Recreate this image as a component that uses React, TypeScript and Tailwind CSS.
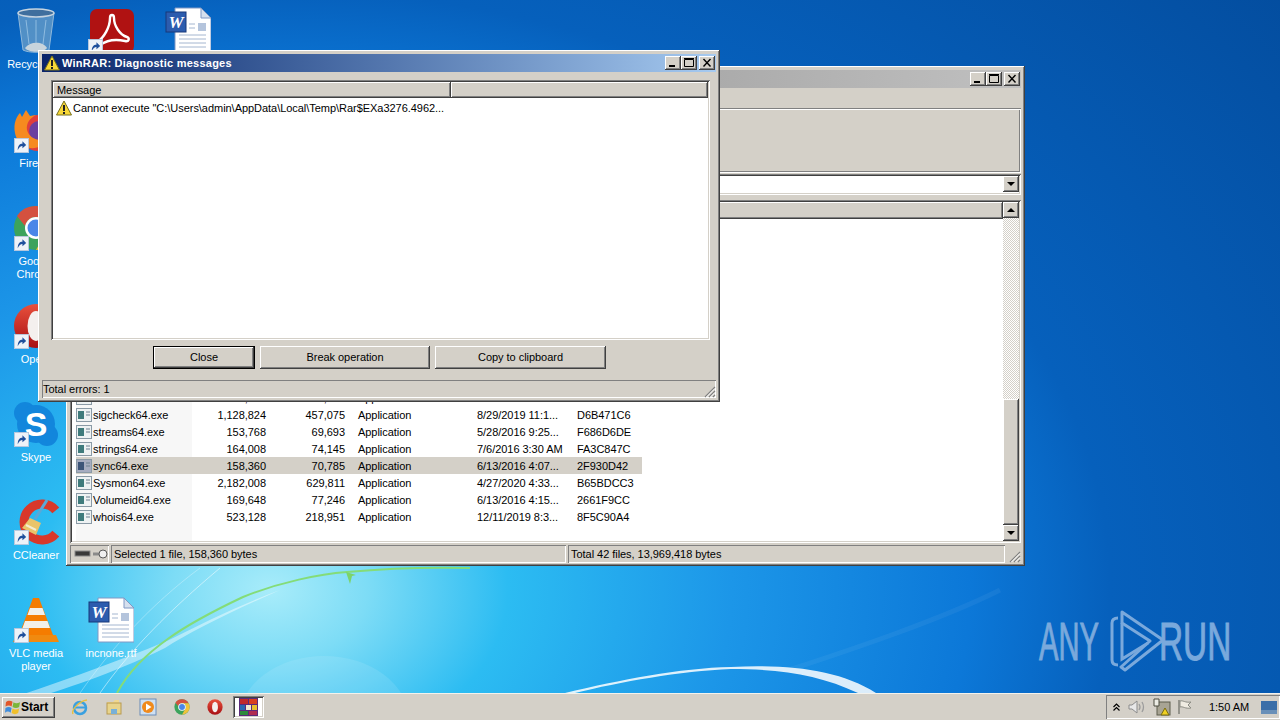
import type { ReactNode } from "react";

const raised = "shadow-[inset_-1px_-1px_0_#404040,inset_1px_1px_0_#ffffff,inset_-2px_-2px_0_#808080,inset_2px_2px_0_#d4d0c8]";
const sunken = "shadow-[inset_1px_1px_0_#808080,inset_-1px_-1px_0_#ffffff,inset_2px_2px_0_#404040,inset_-2px_-2px_0_#d4d0c8]";
const thinSunken = "shadow-[inset_1px_1px_0_#808080,inset_-1px_-1px_0_#ffffff]";
const groove = "shadow-[inset_1px_1px_0_#808080,inset_-1px_-1px_0_#ffffff,inset_2px_2px_0_#ffffff,inset_-2px_-2px_0_#808080]";
const uiFont = "font-['Liberation_Sans',Arial,sans-serif] text-[11px] leading-[13px] tracking-[-0.04px]";

function Wallpaper() {
  return (
    <svg className="absolute inset-0 h-[720px] w-[1280px]" viewBox="0 0 1280 720">
      <defs>
        <radialGradient
          id="sky"
          gradientUnits="userSpaceOnUse"
          cx="270"
          cy="590"
          r="1000"
          gradientTransform="translate(270 590) scale(1.4 1) translate(-270 -590)"
        >
          <stop offset="0" stopColor="#a8ecfa" />
          <stop offset="0.07" stopColor="#7ddcf6" />
          <stop offset="0.17" stopColor="#2cbcf2" />
          <stop offset="0.33" stopColor="#1c96e8" />
          <stop offset="0.5" stopColor="#0c78d8" />
          <stop offset="0.6" stopColor="#0660bc" />
          <stop offset="1" stopColor="#034a9a" />
        </radialGradient>
      </defs>
      <rect width="1280" height="720" fill="url(#sky)" />
      <ellipse cx="324" cy="720" rx="85" ry="64" fill="#ffffff" opacity="0.1" />
      <path d="M0 702 C50 685 110 665 169 640 C205 622 240 605 280 590 C230 612 190 632 165 648 C110 675 60 690 30 700Z" fill="#ffffff" opacity="0.45" />
      <path d="M100 693 C130 650 170 610 220 568" stroke="#ffffff" strokeWidth="1" fill="none" opacity="0.5" />
      <path d="M80 693 C110 650 150 605 200 568" stroke="#ffffff" strokeWidth="1" fill="none" opacity="0.3" />
      <path d="M117 693 C140 650 190 622 243 597 C280 582 320 574 347 572 C390 568 430 567 470 568" stroke="#84dc78" strokeWidth="2" fill="none" />
      <path d="M346 572 L350 584 L352 576 L356 575Z" fill="#7bd46a" />
      <path d="M565 693 C620 680 680 668 731 667 C790 664 840 670 876 693 L858 693 C820 675 780 669 731 669 C680 671 620 682 575 693Z" fill="#ffffff" opacity="0.85" />
      <path d="M789 670 C850 650 940 620 1000 590" stroke="#ffffff" strokeWidth="5" fill="none" opacity="0.05" />
    </svg>
  );
}

function ShortcutBadge() {
  return (
    <svg className="absolute bottom-0 left-[2px] h-[15px] w-[15px]" viewBox="0 0 16 16">
      <rect x="0.5" y="0.5" width="15" height="15" fill="#eef2f8" stroke="#b8c8de" />
      <path d="M4 13 C4 8 6 6 9 6 L9 3.5 L13 7.5 L9 11 L9 8.5 C7 8.5 5.5 10 4 13Z" fill="#1f4f9c" />
    </svg>
  );
}

function DocGlyph() {
  return (
    <svg className="h-[46px] w-[46px]" viewBox="0 0 46 46">
      <path d="M10 1 H36 L46 11 V45 H10Z" fill="#ffffff" stroke="#8098c4" />
      <path d="M36 1 V11 H46Z" fill="#d6e0ee" stroke="#8098c4" />
      <rect x="33" y="16" width="8" height="8" fill="#b4c4dc" />
      <path d="M14 28 H41 M14 32 H41 M14 36 H41 M14 40 H41 M24 17 H30 M24 21 H30" stroke="#a4b6d0" strokeWidth="1" />
      <rect x="1" y="5" width="20" height="20" fill="#2c5cae" stroke="#16397a" />
      <text x="11" y="21" textAnchor="middle" fontFamily="Liberation Serif, serif" fontWeight="700" fontStyle="italic" fontSize="17" fill="#ffffff">W</text>
    </svg>
  );
}

function BinGlyph() {
  return (
    <svg className="h-[46px] w-[40px]" viewBox="0 0 40 46">
      <path d="M2 5 L7 42 C12 45 28 45 33 42 L38 5Z" fill="#5f98c8" opacity="0.85" stroke="#a8c8e0" />
      <ellipse cx="20" cy="5" rx="18" ry="4" fill="#3f6f9e" stroke="#c6d4e0" strokeWidth="1.5" />
      <path d="M10 12 L13 36 M20 12 V36 M30 12 L27 36" stroke="#8fbce0" />
      <path d="M9 40 C14 33 27 33 31 40 C27 45 13 45 9 40Z" fill="#c8d4dc" />
    </svg>
  );
}

function AcrobatGlyph() {
  return (
    <svg className="ml-[4px] h-[44px] w-[44px]" viewBox="0 0 44 44">
      <rect width="44" height="44" rx="7" fill="#b01212" />
      <path d="M7 33 C14 29 20 18 20 9 C20 5 24 5 24 9 C24 17 30 26 37 28 C40 29 39 33 35 32 C26 30 17 31 10 36 C7 38 5 35 7 33Z" fill="none" stroke="#ffffff" strokeWidth="2.4" />
    </svg>
  );
}

function FirefoxGlyph() {
  return (
    <svg className="h-[46px] w-[48px]" viewBox="0 0 48 46">
      <circle cx="26" cy="26" r="18" fill="#e03e3c" />
      <circle cx="27" cy="24" r="10" fill="#6b3fa0" />
      <path d="M3 26 C1 16 5 9 8 6 L10 10 L14 3 L18 9 L24 8 C18 11 14 16 15 23 C17 31 27 36 37 31 C32 40 22 43 14 40 C8 37 4 32 3 26Z" fill="#f68a1f" />
    </svg>
  );
}

function ChromeGlyph({ className = "h-[46px] w-[46px]" }: { className?: string }) {
  return (
    <svg className={className} viewBox="0 0 46 46">
      <circle cx="23" cy="23" r="22" fill="#3ca35c" />
      <path d="M23 1 A22 22 0 0 1 42 12 L23 12 A11 11 0 0 0 12 21 L4 11 A22 22 0 0 1 23 1Z" fill="#d4513f" />
      <path d="M42 12 A22 22 0 0 1 23 45 L33 27 A11 11 0 0 0 33 17 L23 12Z" fill="#f0c23a" />
      <circle cx="23" cy="23" r="11" fill="#ffffff" />
      <circle cx="23" cy="23" r="8.5" fill="#4a86e8" />
    </svg>
  );
}

function OperaGlyph({ className = "h-[46px] w-[46px]" }: { className?: string }) {
  return (
    <svg className={className} viewBox="0 0 46 46">
      <defs>
        <linearGradient id="opera" x1="0" y1="0" x2="0" y2="1">
          <stop offset="0" stopColor="#e8503c" />
          <stop offset="1" stopColor="#a80f14" />
        </linearGradient>
      </defs>
      <circle cx="23" cy="23" r="22" fill="url(#opera)" />
      <ellipse cx="23" cy="23" rx="8.5" ry="15" fill="#f4f0ee" />
    </svg>
  );
}

function SkypeGlyph() {
  return (
    <svg className="h-[46px] w-[46px]" viewBox="0 0 46 46">
      <circle cx="12" cy="12" r="11" fill="#1286dc" />
      <circle cx="34" cy="34" r="11" fill="#1286dc" />
      <circle cx="23" cy="23" r="19" fill="#1286dc" />
      <text x="23" y="35" textAnchor="middle" fontFamily="Liberation Sans, sans-serif" fontWeight="700" fontSize="34" fill="#ffffff">S</text>
    </svg>
  );
}

function CCleanerGlyph() {
  return (
    <svg className="h-[46px] w-[48px]" viewBox="0 0 48 46">
      <path d="M43.8 11.4 A18 18 0 1 0 43.8 34.6" stroke="#d8382a" strokeWidth="9" fill="none" />
      <path d="M35 1 L23 20" stroke="#5aa8d8" strokeWidth="3" />
      <path d="M18 19 L29 24 L24 36 L10 29Z" fill="#e9c46a" />
      <path d="M14 26 L24 31" stroke="#f4ecd0" strokeWidth="2" />
    </svg>
  );
}

function VlcGlyph() {
  return (
    <svg className="h-[46px] w-[46px]" viewBox="0 0 46 46">
      <path d="M20 1 H26 L40 38 H6Z" fill="#f57c00" />
      <path d="M17 11 H29.5 L32 18 H14.5Z M12 24 H34.5 L37 31 H9.5Z" fill="#f2f0ea" />
      <path d="M3 38 H43 L46 45 H0Z" fill="#f08a10" />
    </svg>
  );
}

type DesktopIconProps = {
  x: number;
  y: number;
  glyph: ReactNode;
  shortcut?: boolean;
  label?: string[];
};

function DesktopIcon({ x, y, glyph, shortcut, label }: DesktopIconProps) {
  return (
    <div className="absolute flex w-[76px] flex-col items-center" style={{ left: x, top: y }}>
      <div className="relative flex h-[46px] w-[48px] items-center justify-center">
        {glyph}
        {shortcut && <ShortcutBadge />}
      </div>
      {label && (
        <div className={`${uiFont} mt-[4px] text-center text-white`}>
          {label.map((l) => (
            <div key={l}>{l}</div>
          ))}
        </div>
      )}
    </div>
  );
}

function Caption({ kind }: { kind: "min" | "max" | "close" }) {
  return (
    <div className={`${raised} flex h-[14px] w-[16px] items-center justify-center bg-[#d4d0c8]`}>
      <svg className="h-[14px] w-[16px]" viewBox="0 0 16 14">
        {kind === "min" && <rect x="4" y="9" width="6" height="2" fill="#000" />}
        {kind === "max" && <path d="M3.5 3.5 H12.5 V10.5 H3.5Z M3 2.5 H13" stroke="#000" fill="none" />}
        {kind === "close" && <path d="M4.5 3 L11.5 10.5 M11.5 3 L4.5 10.5" stroke="#000" strokeWidth="1.4" />}
      </svg>
    </div>
  );
}

function Captions() {
  return (
    <div className="ml-auto flex items-center pr-[1px]">
      <Caption kind="min" />
      <Caption kind="max" />
      <div className="ml-[2px]">
        <Caption kind="close" />
      </div>
    </div>
  );
}

function Grip() {
  return (
    <svg className="h-[13px] w-[13px]" viewBox="0 0 13 13">
      <path d="M12 2 L2 12 M12 6 L6 12 M12 10 L10 12" stroke="#808080" strokeWidth="1.2" />
      <path d="M12 3.5 L3.5 12 M12 7.5 L7.5 12 M12 11.5 L11.5 12" stroke="#ffffff" strokeWidth="1" />
    </svg>
  );
}

function WarnIcon({ size }: { size: string }) {
  return (
    <svg className={size} viewBox="0 0 16 16">
      <path d="M8 1 L15.5 15 H0.5Z" fill="#f8d838" stroke="#77701c" strokeLinejoin="round" />
      <rect x="7" y="5" width="2" height="6" fill="#222" />
      <rect x="7" y="12" width="2" height="2" fill="#222" />
    </svg>
  );
}

function ExeIcon({ selected }: { selected?: boolean }) {
  return (
    <svg className="h-[14px] w-[16px] shrink-0" viewBox="0 0 16 14">
      <rect x="0.5" y="0.5" width="15" height="13" fill={selected ? "#a6acc0" : "#eef2f3"} stroke="#8a9aa6" />
      <rect x="2" y="3" width="6" height="8" fill={selected ? "#3c5478" : "#3f7b7c"} />
      <path d="M10 4 H14 M10 7 H14" stroke="#6c8090" />
    </svg>
  );
}

const files = [
  // mostly behind the dialog, only the tails of this row show below it
  { name: "sdelete64.exe", size: "151,432", packed: "69,120", type: "Application", date: "", crc: "" },
  { name: "sigcheck64.exe", size: "1,128,824", packed: "457,075", type: "Application", date: "8/29/2019 11:1...", crc: "D6B471C6" },
  { name: "streams64.exe", size: "153,768", packed: "69,693", type: "Application", date: "5/28/2016 9:25...", crc: "F686D6DE" },
  { name: "strings64.exe", size: "164,008", packed: "74,145", type: "Application", date: "7/6/2016 3:30 AM", crc: "FA3C847C" },
  { name: "sync64.exe", size: "158,360", packed: "70,785", type: "Application", date: "6/13/2016 4:07...", crc: "2F930D42", selected: true },
  { name: "Sysmon64.exe", size: "2,182,008", packed: "629,811", type: "Application", date: "4/27/2020 4:33...", crc: "B65BDCC3" },
  { name: "Volumeid64.exe", size: "169,648", packed: "77,246", type: "Application", date: "6/13/2016 4:15...", crc: "2661F9CC" },
  { name: "whois64.exe", size: "523,128", packed: "218,951", type: "Application", date: "12/11/2019 8:3...", crc: "8F5C90A4" },
];

function FileRow({ f }: { f: (typeof files)[number] }) {
  return (
    <div className={`flex h-[17px] w-[566px] items-center ${f.selected ? "bg-[#d4d0c8]" : ""}`}>
      <div className={`flex h-full w-[116px] items-center gap-[1px] ${f.selected ? "" : "bg-[#f7f7f7]"}`}>
        <ExeIcon selected={f.selected} />
        <span className="pt-[2px]">{f.name}</span>
      </div>
      <span className="w-[74px] pt-[2px] text-right">{f.size}</span>
      <span className="w-[79px] pt-[2px] text-right">{f.packed}</span>
      <span className="w-[132px] pl-[13px] pt-[2px]">{f.type}</span>
      <span className="w-[100px] pt-[2px]">{f.date}</span>
      <span className="pt-[2px]">{f.crc}</span>
    </div>
  );
}

function ScrollButton({ dir }: { dir: "up" | "down" }) {
  return (
    <div className={`${raised} flex h-[16px] w-[16px] shrink-0 items-center justify-center bg-[#d4d0c8]`}>
      <svg className="h-[6px] w-[8px]" viewBox="0 0 8 6">
        <path d={dir === "up" ? "M4 1 L8 5 H0Z" : "M0 1 H8 L4 5Z"} fill="#000" />
      </svg>
    </div>
  );
}

function WinRarWindow() {
  return (
    <div className={`${raised} ${uiFont} absolute left-[66px] top-[66px] flex h-[500px] w-[959px] flex-col bg-[#d4d0c8] px-[4px] pb-[3px] pt-[4px] text-black`}>
      <div className="flex h-[18px] shrink-0 items-center bg-gradient-to-r from-[#808080] to-[#c0c0c0]">
        <Captions />
      </div>
      <div className="h-[20px] shrink-0" />
      <div className={`${groove} ml-[-2px] h-[65px] shrink-0`} />
      <div className="flex h-[22px] shrink-0 items-center">
        <div className={`${sunken} flex h-[21px] flex-1 items-center justify-end bg-white p-[2px]`}>
          <ScrollButton dir="down" />
        </div>
      </div>
      <div className="h-[5px] shrink-0" />
      <div className={`${sunken} flex min-h-0 flex-1 flex-col p-[2px]`}>
        <div className="flex min-h-0 flex-1">
          <div className="flex min-w-0 flex-1 flex-col bg-white">
            <div className={`${raised} h-[17px] shrink-0 bg-[#d4d0c8]`} />
            <div className="flex min-h-0 flex-1 flex-col pl-[4px]">
              <div className="h-[170px] w-[116px] shrink-0 bg-[#f7f7f7]" />
              {files.map((f) => (
                <FileRow key={f.name} f={f} />
              ))}
              <div className="w-[116px] flex-1 bg-[#f7f7f7]" />
            </div>
          </div>
          <div className="flex w-[16px] shrink-0 flex-col bg-[repeating-conic-gradient(#d4d0c8_0_25%,#ffffff_0_50%)] bg-[length:2px_2px]">
            <ScrollButton dir="up" />
            <div className="flex-1" />
            <div className={`${raised} h-[126px] shrink-0 bg-[#d4d0c8]`} />
            <ScrollButton dir="down" />
          </div>
        </div>
      </div>
      <div className="mt-[2px] flex h-[18px] shrink-0 gap-[2px]">
        <div className={`${thinSunken} flex w-[39px] items-center pl-[4px]`}>
          <svg className="h-[12px] w-[34px]" viewBox="0 0 34 12">
            <rect x="1" y="3" width="15" height="5" fill="#3a3a3a" stroke="#8a8a8a" />
            <path d="M19 6 H27" stroke="#8a8a8a" strokeWidth="3" />
            <circle cx="29" cy="6" r="4" fill="#f0f0f0" stroke="#5a5a5a" />
          </svg>
        </div>
        <div className={`${thinSunken} flex w-[455px] items-center pl-[3px]`}>Selected 1 file, 158,360 bytes</div>
        <div className={`${thinSunken} flex flex-1 items-center pl-[3px]`}>Total 42 files, 13,969,418 bytes</div>
        <div className="flex w-[14px] items-end justify-end">
          <Grip />
        </div>
      </div>
    </div>
  );
}

function DialogButton({ label, w, primary }: { label: string; w: string; primary?: boolean }) {
  return (
    <div className={`${w} flex h-[23px] items-center justify-center bg-[#d4d0c8] ${primary ? "border border-black" : ""}`}>
      <div className={`${raised} flex h-full w-full items-center justify-center`}>{label}</div>
    </div>
  );
}

function DiagnosticDialog() {
  return (
    <div className={`${raised} ${uiFont} absolute left-[38px] top-[50px] flex h-[352px] w-[682px] flex-col bg-[#d4d0c8] p-[4px] text-black`}>
      <div className="flex h-[18px] shrink-0 items-center bg-gradient-to-r from-[#0a246a] to-[#a6caf0] pl-[2px]">
        <WarnIcon size="h-[16px] w-[16px]" />
        <span className="ml-[2px] font-bold tracking-[0.25px] text-white">WinRAR: Diagnostic messages</span>
        <Captions />
      </div>
      <div className={`${sunken} ml-[9px] mr-[6px] mt-[8px] flex h-[260px] shrink-0 flex-col bg-white p-[2px]`}>
        <div className="flex h-[16px] shrink-0">
          <div className={`${raised} flex w-[398px] items-center bg-[#d4d0c8] pl-[4px]`}>Message</div>
          <div className={`${raised} flex-1 bg-[#d4d0c8]`} />
        </div>
        <div className="flex h-[19px] items-center gap-[1px] pl-[3px]">
          <WarnIcon size="h-[16px] w-[16px]" />
          <span className="pt-[1px]">Cannot execute "C:\Users\admin\AppData\Local\Temp\Rar$EXa3276.4962...</span>
        </div>
      </div>
      <div className="ml-[111px] mt-[6px] flex shrink-0 gap-[5px]">
        <DialogButton label="Close" w="w-[102px]" primary />
        <DialogButton label="Break operation" w="w-[170px]" />
        <DialogButton label="Copy to clipboard" w="w-[171px]" />
      </div>
      <div className={`${thinSunken} mt-auto flex h-[18px] shrink-0 items-center pl-[1px]`}>
        <span>Total errors: 1</span>
        <div className="ml-auto self-end">
          <Grip />
        </div>
      </div>
    </div>
  );
}

function StartFlag() {
  return (
    <svg className="h-[16px] w-[16px]" viewBox="0 0 17 16">
      <path d="M1 3 C3 1 6 1 8 2.5 L7 7.5 C5 6 3 6 0.5 7.5Z" fill="#e2572a" />
      <path d="M9 3 C11 4.5 13 4.5 16 3 L15 8 C13 9.5 10.5 9.5 8 8Z" fill="#7bb63a" />
      <path d="M0.5 9 C3 7.5 5 7.5 7 9 L6 14 C4 12.5 2 12.5 0 14Z" fill="#3f8ddc" />
      <path d="M8 9.5 C10 11 13 11 15 9.5 L14 14.5 C12 16 9 16 7 14.5Z" fill="#f0c02c" />
    </svg>
  );
}

function IeGlyph() {
  return (
    <svg className="h-[18px] w-[18px]" viewBox="0 0 18 18">
      <circle cx="9" cy="10" r="6" fill="none" stroke="#3aa0e0" strokeWidth="2.5" />
      <path d="M4 9.5 H14" stroke="#3aa0e0" strokeWidth="2" />
      <path d="M2 16 C0 12 8 3 16 2" stroke="#e8c040" strokeWidth="1.4" fill="none" />
    </svg>
  );
}

function FolderGlyph() {
  return (
    <svg className="h-[18px] w-[18px]" viewBox="0 0 18 18">
      <path d="M2 4 H8 L10 2 H14 V5 H2Z" fill="#f0d890" />
      <rect x="2" y="5" width="14" height="11" fill="#e8d48c" stroke="#b89a50" />
      <rect x="6" y="11" width="6" height="5" fill="#78b0d8" />
    </svg>
  );
}

function MediaGlyph() {
  return (
    <svg className="h-[18px] w-[18px]" viewBox="0 0 18 18">
      <rect x="1" y="1" width="16" height="16" fill="#cfe0f2" stroke="#6a8cb8" />
      <circle cx="9" cy="9" r="6" fill="#f08a1c" />
      <path d="M7 5.5 L12.5 9 L7 12.5Z" fill="#ffffff" />
    </svg>
  );
}

function WinRarGlyph() {
  return (
    <svg className="h-[18px] w-[19px]" viewBox="0 0 19 18">
      <rect width="19" height="18" fill="#5a2a7a" />
      <rect x="1" y="1" width="8" height="5" fill="#c02a2a" />
      <rect x="10" y="1" width="8" height="5" fill="#d84020" />
      <rect x="1" y="7" width="5" height="5" fill="#2a6ab0" />
      <rect x="7" y="7" width="5" height="5" fill="#f0e8d0" />
      <rect x="13" y="7" width="5" height="5" fill="#e8c030" />
      <rect x="1" y="13" width="8" height="4" fill="#2e8a3a" />
      <rect x="10" y="13" width="8" height="4" fill="#b02a50" />
    </svg>
  );
}

function Tray() {
  return (
    <div className={`${thinSunken} ml-auto flex h-[24px] w-[174px] items-center pl-[7px]`}>
      <svg className="h-[8px] w-[7px]" viewBox="0 0 7 8">
        <path d="M0.5 4 L3.5 1 L6.5 4 M0.5 7.5 L3.5 4.5 L6.5 7.5" stroke="#000" strokeWidth="1.2" fill="none" />
      </svg>
      <svg className="ml-[8px] h-[16px] w-[18px]" viewBox="0 0 18 16">
        <path d="M1 6 H4 L9 2 V14 L4 10 H1Z" fill="#e8e8e8" stroke="#8c8c8c" />
        <path d="M11 5 Q13 8 11 11 M14 3 Q17 8 14 13" stroke="#9c9c9c" fill="none" strokeWidth="1.3" />
      </svg>
      <svg className="ml-[7px] h-[18px] w-[18px]" viewBox="0 0 18 18">
        <rect x="4" y="4" width="13" height="13" fill="#a8a494" stroke="#5c5c4c" />
        <path d="M1 1 H6 V8 H1Z" fill="#ecece4" stroke="#4c4c40" />
        <path d="M8 17 L12 10 L16 17Z" fill="#f0d020" stroke="#7a6c10" />
      </svg>
      <svg className="ml-[6px] h-[16px] w-[16px]" viewBox="0 0 16 16">
        <path d="M2 1 V15" stroke="#808078" strokeWidth="1.5" />
        <path d="M3 2 C6 1 8 4 14 3 L11 6 L14 9 C8 10 6 7 3 8Z" fill="#f0ece2" stroke="#8c8c84" />
      </svg>
      <span className="ml-[16px] w-[44px] whitespace-nowrap">1:50 AM</span>
      <svg className="ml-[8px] h-[13px] w-[16px]" viewBox="0 0 16 13">
        <rect width="16" height="13" fill="#3a6ea8" />
        <rect y="9" width="16" height="4" fill="#6a90b8" />
      </svg>
    </div>
  );
}

function Taskbar() {
  return (
    <div className={`${uiFont} absolute bottom-0 left-0 flex h-[27px] w-[1280px] items-center border-t border-[#f4f2ec] bg-[#d4d0c8] pl-[2px] text-black`}>
      <div className={`${raised} flex h-[21px] w-[53px] items-center pl-[3px] text-[12px] font-bold`}>
        <StartFlag />
        Start
      </div>
      <div className="ml-[16px] flex items-center gap-[16px]">
        <IeGlyph />
        <FolderGlyph />
        <MediaGlyph />
        <ChromeGlyph className="h-[16px] w-[18px]" />
        <OperaGlyph className="-ml-[1px] h-[16px] w-[18px]" />
      </div>
      <div className={`${sunken} ml-[9px] flex h-[22px] w-[31px] items-center justify-center bg-white`}>
        <WinRarGlyph />
      </div>
      <Tray />
    </div>
  );
}

function Watermark() {
  return (
    <div className="absolute left-[1039px] top-[610px] flex h-[62px] items-center text-[#7aa9dc] [-webkit-text-stroke:1px_#7aa9dc]">
      <span className="w-[71px] origin-left scale-x-[0.55] font-['Liberation_Sans',sans-serif] text-[53px] leading-none">ANY</span>
      <svg className="h-[62px] w-[55px] shrink-0" viewBox="0 0 55 62">
        <path d="M8 8 C4 8 2 10 2 13 V50 C2 53 4 55 8 55" stroke="#7aa9dc" strokeWidth="3" fill="none" />
        <path d="M12 2 L53 30 L15 60 L11 57 L40 31 L12 13Z" stroke="#7aa9dc" strokeWidth="3" fill="none" strokeLinejoin="round" />
        <path d="M12 13 V49 L38 33" stroke="#7aa9dc" strokeWidth="3" fill="none" />
      </svg>
      <span className="-ml-[6px] w-[72px] origin-left scale-x-[0.63] font-['Liberation_Sans',sans-serif] text-[53px] leading-none">RUN</span>
    </div>
  );
}

export default function App() {
  return (
    <div className="relative h-[720px] w-[1280px] overflow-hidden bg-[#0a6cc8]">
      <Wallpaper />
      <Watermark />
      <DesktopIcon x={-2} y={8} glyph={<BinGlyph />} label={["Recycle Bin"]} />
      <DesktopIcon x={72} y={8} shortcut glyph={<AcrobatGlyph />} />
      <DesktopIcon x={150} y={7} glyph={<DocGlyph />} />
      <DesktopIcon x={-2} y={107} shortcut glyph={<FirefoxGlyph />} label={["Firefox"]} />
      <DesktopIcon x={-2} y={205} shortcut glyph={<ChromeGlyph />} label={["Google", "Chrome"]} />
      <DesktopIcon x={-2} y={303} shortcut glyph={<OperaGlyph />} label={["Opera"]} />
      <DesktopIcon x={-2} y={401} shortcut glyph={<SkypeGlyph />} label={["Skype"]} />
      <DesktopIcon x={-2} y={499} shortcut glyph={<CCleanerGlyph />} label={["CCleaner"]} />
      <DesktopIcon x={-2} y={597} shortcut glyph={<VlcGlyph />} label={["VLC media", "player"]} />
      <DesktopIcon x={73} y={597} glyph={<DocGlyph />} label={["incnone.rtf"]} />
      <WinRarWindow />
      <DiagnosticDialog />
      <Taskbar />
    </div>
  );
}
